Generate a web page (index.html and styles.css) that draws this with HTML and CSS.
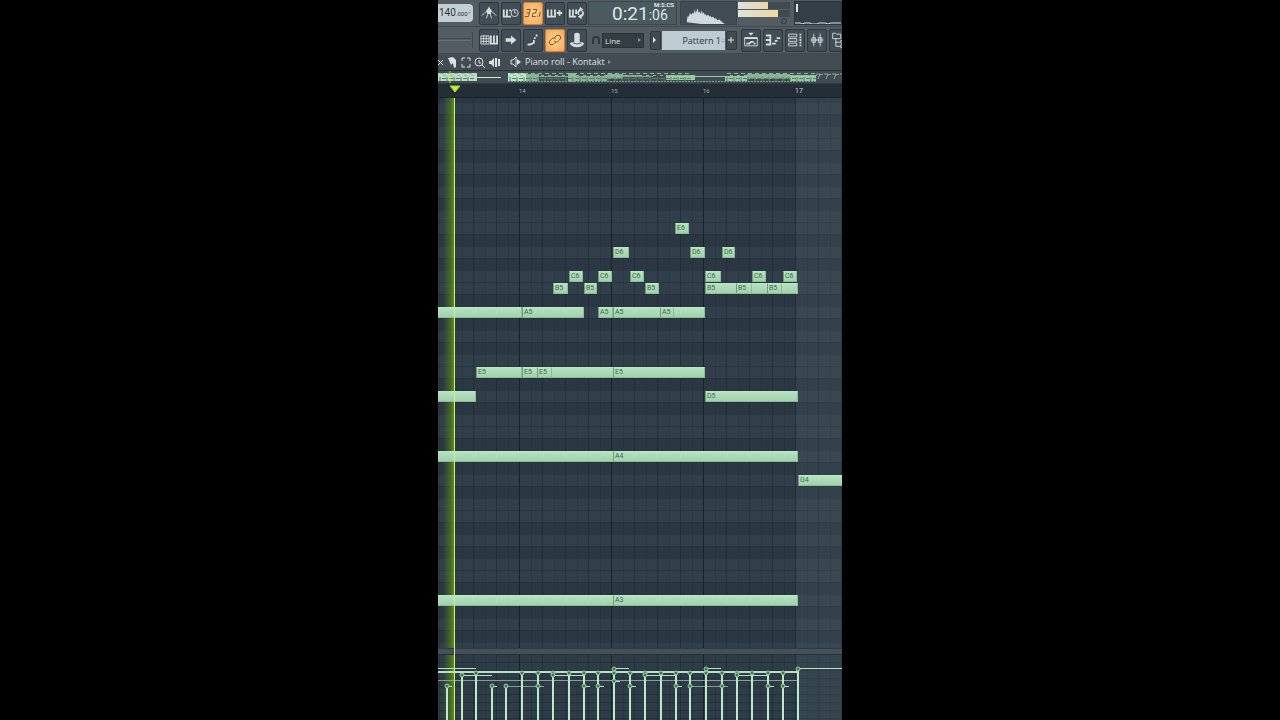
FILE: index.html
```html
<!DOCTYPE html>
<html lang="en">

<head>
  <meta charset="UTF-8" />
  <title>Piano roll - Kontakt</title>
  <link rel="stylesheet" href="styles.css">
</head>

<body>
  <main class="daw">
    <div class="toolbar">
      <button class="tempo">140<small>.000</small><i>÷</i></button>
      <div class="btn-group">
        <button class="tool" aria-label="Metronome"><svg viewBox="0 0 20 20"><path d="M2 13l4-4 4-2 4 2 4 4M10 8l-3 8M10 8l3 8M10 3v3" /><path class="fill" d="M7 7l3-3 3 3-1 4h-4z" /></svg></button>
        <button class="tool" aria-label="Wait for input"><svg viewBox="0 0 20 20"><path class="thick" d="M2 6v8h8M5.500 6v8M9 6v2" /><circle cx="14" cy="10" r="4" /><path d="M14 7v3h2" /></svg></button>
        <button class="tool on" aria-label="Countdown"><svg viewBox="0 0 20 20"><path d="M3 6h4l-1 4H3M6 10l-1 4H1M10 6h4l-1 4h-3l-1 4h4M15 13v1M18 9l-1 5" /></svg></button>
        <button class="tool" aria-label="Overdub"><svg viewBox="0 0 20 20"><path class="thick" d="M2 6v8h8V6M6 6v8M12 10h6M15 7v6" /></svg></button>
        <button class="tool" aria-label="Loop record"><svg viewBox="0 0 20 20"><path class="thick" d="M2 6v8h7M5.500 6v8M9 6v5" /><path class="thick" d="M12 12q-2-4 2-6M16 8q2 4-2 6" /><path class="fill" d="M13 3l4 3-4 3zM15 11l-4 3 4 3z" /></svg></button>
      </div>
      <div class="clock"><span class="clock-main">0:21</span><span class="clock-cs">:06</span><span class="clock-unit">M:S:CS</span></div>
      <svg class="scope" viewBox="0 0 56 24" preserveAspectRatio="none" aria-hidden="true">
        <path d="M6 22V19l1-4 1 1 1-4 2 2 1-3 1 2 1-5 1 4 2-5 1 5 1-2 1 3 1-4 1 4 1-2 1 3 1-1 1 2 2-1 1 2 1-1 1 2 2-1 1 2 2 0 1 2 2-1 2 2 2 2 2 1 4 3v1z" />
      </svg>
      <div class="meters">
        <div class="meter"><span class="meter-left"></span></div>
        <div class="meter"><span class="meter-right"></span></div>
        <i></i>
      </div>
      <div class="master"><svg viewBox="0 0 47 24"><path d="M0 21h5l2 1 3-1h5l2 1h5l2-1h6l3 1 3-1h11" /><path class="thick" d="M2 2v8" /></svg></div>
    </div>

    <div class="toolbar">
      <div class="slot"></div>
      <div class="btn-group">
        <button class="tool" aria-label="Typing keyboard"><svg viewBox="0 0 20 20"><path d="M1 5.500h9v9H1zM1 8.500h9M1 11.500h9M4 5v9M7 5v9" /><path class="thick" d="M12 5v9h7V5M15.500 5v9" /></svg></button>
        <button class="tool" aria-label="Auto scroll"><svg viewBox="0 0 20 20"><path class="fill" d="M4 8h6V5l6 5-6 5v-3H4z" /></svg></button>
        <button class="tool" aria-label="Step edit"><svg viewBox="0 0 20 20"><path class="thick" d="M4 15h3l4-2v-3M12 9V7M14 6V4" /></svg></button>
        <button class="tool on" aria-label="Link notes"><svg viewBox="0 0 20 20"><path d="M9 8l3-3q3-1 4 1 1 2-1 4l-2 2q-2 1-4-1M11 12l-3 3q-3 1-4-1-1-2 1-4l2-2q2-1 4 1" /></svg></button>
        <button class="tool" aria-label="Multilink"><svg viewBox="0 0 20 20"><path class="fill" d="M7 3q3-2 6 0v9q4 0 5 2-2 4-8 4t-8-4q1-2 5-2z" /><path class="cut" d="M5 13q5 3 10 0" /></svg></button>
      </div>
      <svg class="magnet" viewBox="0 0 10 10" aria-hidden="true"><path d="M2 9V5a3 3 0 0 1 6 0v4" /></svg>
      <div class="snap"><select aria-label="Snap"><option>Line</option></select></div>
      <div class="pattern">
        <button class="step" aria-label="Pattern menu"><svg viewBox="0 0 8 8"><path class="fill" d="M2 1l3 3-3 3z" /></svg></button>
        <button class="pattern-name">Pattern 1<i>÷</i></button>
        <button class="step" aria-label="Add pattern"><svg viewBox="0 0 8 8"><path d="M1 4h6M4 1v6" /></svg></button>
      </div>
      <div class="btn-group windows">
        <button class="tool" aria-label="Playlist"><svg viewBox="0 0 20 20"><path d="M3 7.500h14v9H3z" /><path class="thick" d="M3 8h14M5 14h3l2-2h3M13 14h2" /><path class="fill" d="M7 2h6l-3 3z" /></svg></button>
        <button class="tool" aria-label="Piano roll"><svg viewBox="0 0 20 20"><path class="thick" d="M2 5h5v10H2M2 10h5M9 14h4M12 11h3M14 8h4" /></svg></button>
        <button class="tool" aria-label="Channel rack"><svg viewBox="0 0 20 20"><path d="M3 3.500h9v3H3zM3 8.500h9v3H3zM3 13.500h9v3H3z" /><path class="thick dash" d="M16 3v14" /></svg></button>
        <button class="tool" aria-label="Mixer"><svg viewBox="0 0 20 20"><path d="M6.500 3v14M13.500 3v14M3 10h14" /><path d="M4.500 7.500h4v5h-4zM11.500 7.500h4v5h-4z" /></svg></button>
        <button class="tool" aria-label="Browser"><svg viewBox="0 0 20 20"><path d="M3 2.500h3l1 1h5v5H3zM6.500 8v9h5M6 12.500h5M12 10.500h6v3h-6zM12 15.500h6v3h-6z" /></svg></button>
      </div>
    </div>

    <div class="titlebar">
      <svg class="title-tools" viewBox="0 0 64 16" aria-hidden="true">
        <path d="M0 6l5 5M5 6l-5 5" />
        <path class="fill" d="M10 4l5-1 3 3v7l-2 1-1-5-2 2z" />
        <path d="M24 7V4h3M29 4h3v3M32 10v3h-3M27 13h-3v-3" />
        <circle cx="41" cy="8" r="4" /><path d="M44 11l3 3M41 6v3h2" />
        <path class="fill" d="M51 7h2l3-3v9l-3-3h-2z" /><path class="thick" d="M58 4v9M61 5v7" />
      </svg>
      <svg class="speaker" viewBox="0 0 12 12" aria-hidden="true"><path d="M1 4h2l3-3v10L3 8H1z" /><path class="fill" d="M7 3l4 3-4 3z" /></svg>
      <h1>Piano roll - Kontakt</h1>
      <svg class="crumb" viewBox="0 0 4 6" aria-hidden="true"><path class="fill" d="M0 1l3 2-3 2z" /></svg>
    </div>

    <svg class="overview" id="overview" viewBox="0 0 404 14" preserveAspectRatio="none" aria-hidden="true"></svg>

    <div class="ruler">
      <svg class="marker" viewBox="0 0 12 8" aria-hidden="true"><path d="M1 1h10L6 7z" /></svg>
      <span class="bar-no">14</span><span class="bar-no">15</span><span class="bar-no">16</span><span class="bar-no strong">17</span>
    </div>

    <div class="roll" id="roll"></div>
    <div class="splitter"></div>
    <div class="velocity"><svg id="velocity" width="404" height="65" aria-hidden="true"></svg></div>
    <div class="playhead-glow"></div>
    <div class="playhead"></div>
  </main>

  <script src="script.js"></script>
</body>

</html>
```

FILE: styles.css
```css
:root {
  --panel: #535c62;
  --icon: #d5dddf;
  --grid-dark: rgba(16, 26, 34, 0.6);
}

* {
  margin: 0;
  padding: 0;
  box-sizing: border-box;
}

body {
  background: #000;
  font-family: "Open Sans", "Noto Sans", sans-serif;
  color: #dce3e6;
  overflow: hidden;
}

button,
select {
  font: inherit;
  color: inherit;
  border: none;
}

.daw {
  position: relative;
  display: flex;
  flex-direction: column;
  width: 100%;
  max-width: 404px;
  height: 100vh;
  margin: 0 auto;
  overflow: hidden;
  background: var(--panel);
}

/* Toolbars */
.toolbar {
  display: flex;
  flex: none;
  align-items: center;
  height: 27px;
  background: var(--panel);
  border-bottom: 1px solid #414a50;
}

.tempo {
  display: flex;
  flex: none;
  width: 35px;
  height: 18px;
  margin-right: 6px;
  padding-left: 1px;
  border-radius: 0 4px 4px 0;
  background: #c4cfd4;
  color: #2c363c;
  font-family: Roboto, sans-serif;
  font-size: 10px;
  line-height: 18px;
  white-space: nowrap;
}

.tempo small {
  font-size: 6px;
  line-height: 20px;
}

.tempo i,
.pattern-name i {
  color: #7f8b92;
  font-size: 7px;
  font-style: normal;
}

.btn-group {
  display: flex;
  flex: none;
  gap: 2px;
}

.tool {
  flex: none;
  width: 20px;
  height: 23px;
  border: 1px solid #2d363d;
  border-radius: 2px;
  background: #434d55;
  color: var(--icon);
}

.tool svg {
  display: block;
  width: 18px;
  height: 18px;
}

svg {
  fill: none;
  stroke: currentColor;
}

svg .fill {
  fill: currentColor;
  stroke: none;
}

svg .thick {
  stroke-width: 2;
}

svg .dash {
  stroke-dasharray: 2 1;
}

svg .cut {
  stroke: #434d55;
}

.tool.on {
  background: radial-gradient(#ffd899, #f9a550);
  border-color: #c9803c;
  color: #69421f;
}

.clock {
  position: relative;
  display: flex;
  flex: none;
  align-items: baseline;
  width: 89px;
  height: 24px;
  margin-left: 1px;
  padding-left: 23px;
  border: 1px solid #3c484c;
  background: #4a5b5f;
  color: #dce8e6;
  font-family: Roboto, "Open Sans", sans-serif;
  line-height: 24px;
}

.clock-main {
  font-size: 19px;
}

.clock-cs {
  font-size: 14px;
}

.clock-unit {
  position: absolute;
  top: 0;
  right: 2px;
  font-size: 6px;
  font-weight: bold;
  line-height: 6px;
}

.scope {
  flex: none;
  width: 57px;
  height: 24px;
  margin-left: 3px;
  border: 1px solid #38434b;
  background: #414c55;
}

.scope path {
  fill: #d0d9df;
  stroke: none;
}

.meters {
  display: flex;
  flex: none;
  flex-direction: column;
  gap: 1px;
  width: 52px;
  height: 23px;
  margin-left: 1px;
}

.meter {
  height: 7px;
  background: #414a51;
}

.meter span {
  display: block;
  height: 100%;
  background: linear-gradient(90deg, #dfe0dc, #ead8a4);
}

.meter-left {
  width: 57%;
}

.meter-right {
  width: 76%;
}

.meters i {
  align-self: flex-end;
  width: 6px;
  height: 6px;
  margin-right: 3px;
  border: 1px solid #2f383e;
  border-radius: 50%;
}

.master {
  flex: 1;
  height: 24px;
  margin-left: 4px;
  overflow: hidden;
  border: 1px solid #29343b;
  background: #333e46;
}

.master svg {
  display: block;
  width: 47px;
  height: 24px;
}

.slot {
  flex: none;
  width: 35px;
  height: 16px;
  margin-right: 6px;
  border-right: 1px solid #3f484e;
  background: linear-gradient(#3f484e, #3f484e) 0 6px / 33px 1px no-repeat, linear-gradient(#677178, #677178) 0 8px / 33px 1px no-repeat;
}

.magnet {
  flex: none;
  width: 10px;
  height: 10px;
  margin-left: 4px;
  color: #30393f;
  stroke-width: 2;
}

.snap {
  position: relative;
  flex: none;
  width: 42px;
  margin-left: 1px;
}

.snap select {
  display: block;
  width: 100%;
  height: 15px;
  padding-left: 2px;
  appearance: none;
  background: #343d44;
  border: 1px solid #2b3339;
  font-size: 8px;
}

.snap::after {
  content: "";
  position: absolute;
  top: 5px;
  right: 1px;
  border: 2px solid transparent;
  border-left: 3px solid #899398;
}

.pattern {
  display: flex;
  flex: none;
  gap: 1px;
  margin-left: 6px;
}

.step {
  width: 11px;
  height: 19px;
  border: 1px solid #2e373d;
  border-radius: 2px;
  background: #414a51;
}

.step svg {
  display: block;
  width: 8px;
  height: 8px;
}

.pattern-name {
  width: 63px;
  height: 19px;
  background: #bdcbd2;
  color: #29343b;
  font-family: "Open Sans", sans-serif;
  font-size: 9px;
  line-height: 19px;
  text-align: right;
  white-space: nowrap;
}

.windows {
  margin-left: 4px;
}

/* Window title */
.titlebar {
  display: flex;
  flex: none;
  align-items: center;
  height: 16px;
  background: #434c53;
}

.title-tools {
  width: 64px;
  height: 16px;
}

.speaker {
  width: 12px;
  height: 12px;
  margin-left: 8px;
}

.titlebar h1 {
  margin-left: 3px;
  font-size: 9px;
  font-weight: normal;
  line-height: 14px;
  white-space: nowrap;
}

.crumb {
  width: 4px;
  height: 6px;
  margin-left: 3px;
  color: #89939a;
}

.overview {
  display: block;
  flex: none;
  width: 100%;
  height: 14px;
  background: #414b52;
}

/* Ruler */
.ruler {
  position: relative;
  display: flex;
  flex: none;
  height: 14px;
  padding-left: 81px;
  background: #232e36;
  border-bottom: 1px solid #18232b;
}

.bar-no {
  flex: none;
  width: 92px;
  color: #a2acb1;
  font-family: Roboto, sans-serif;
  font-size: 6px;
  line-height: 14px;
}

.bar-no.strong {
  width: auto;
  color: #d0d7da;
  font-size: 7px;
}

.marker {
  position: absolute;
  left: 11px;
  top: 1px;
  width: 12px;
  height: 8px;
  fill: #c3ef3c;
  stroke: #a9cf38;
}

/* Note grid: one octave is twelve 12px rows */
.roll {
  position: relative;
  flex: 1;
  overflow: hidden;
  background:
    linear-gradient(90deg, transparent 357px, rgba(120, 145, 150, 0.1) 357px),
    linear-gradient(90deg, var(--grid-dark) 1px, transparent 1px) 81px 0 / 92px 100%,
    linear-gradient(90deg, rgba(16, 26, 34, 0.35) 1px, transparent 1px 12px, rgba(16, 26, 34, 0.15) 12px 13px, transparent 13px) 12px 0 / 23px 100%,
    linear-gradient(rgba(16, 26, 34, 0.2) 1px, transparent 1px) 0 4px / 100% 12px,
    linear-gradient(#313f4b 12px, #2b3844 12px 24px, #313f4b 24px 36px, #2b3844 36px 48px, #313f4b 48px 60px, #2b3844 60px 72px, #313f4b 72px 96px, #2b3844 96px 108px, #313f4b 108px 120px, #2b3844 120px 132px, #313f4b 132px) 0 40px / 100% 144px;
}

.note {
  position: absolute;
  z-index: 1;
  height: 11px;
  padding-left: 1px;
  border: 1px solid #8fbb9b;
  border-top-color: #bce5c4;
  border-left-color: #6f9a7d;
  border-radius: 1px;
  background: linear-gradient(#b5e2bf, #a1d1ad);
  color: #3d6849;
  font-family: Roboto, sans-serif;
  font-size: 7px;
  line-height: 9px;
}

.splitter {
  flex: none;
  height: 7px;
  background: #465057;
  border-top: 1px solid #303a41;
  border-bottom: 1px solid #26313a;
}

/* Velocity lane */
.velocity {
  position: relative;
  z-index: 1;
  flex: none;
  height: 65px;
  overflow: hidden;
  background:
    linear-gradient(90deg, transparent 5px, rgba(86, 130, 24, 0.6) 12px, #5e9a16 17px, transparent 17px),
    linear-gradient(90deg, transparent 357px, rgba(120, 145, 150, 0.1) 357px),
    linear-gradient(90deg, var(--grid-dark) 1px, transparent 1px) 81px 0 / 92px 100%,
    linear-gradient(90deg, rgba(16, 26, 34, 0.35) 1px, transparent 1px 12px, rgba(16, 26, 34, 0.15) 12px 13px, transparent 13px) 12px 0 / 23px 100%,
    linear-gradient(rgba(16, 26, 34, 0.25) 1px, transparent 1px) 0 7px / 100% 8px,
    #2e3c47;
}

.velocity svg {
  display: block;
}

.velocity line {
  stroke: #b9dfc5;
}

.velocity .stem {
  stroke: #bfe8c9;
  stroke-width: 2;
}

.velocity .main {
  stroke-width: 2;
}

.velocity .dim {
  stroke: #839e96;
}

.velocity circle {
  fill: #447453;
  stroke: #9bd0a8;
}

.playhead-glow,
.playhead {
  position: absolute;
  top: 98px;
  bottom: 0;
}

.playhead-glow {
  left: 5px;
  width: 12px;
  bottom: 72px;
  background: linear-gradient(90deg, transparent, rgba(86, 130, 24, 0.6) 60%, #5e9a16);
}

.playhead {
  z-index: 2;
  left: 16px;
  width: 1px;
  background: #d0f27a;
}
```

FILE: script.js
```js
// [pitch, start, end] with time in px from the left edge of the grid
const notes = [
  ['E6', 237, 251],
  ['D6', 175, 191], ['D6', 252, 267], ['D6', 284, 297],
  ['C6', 131, 145], ['C6', 160, 174], ['C6', 192, 206], ['C6', 267, 283], ['C6', 314, 328], ['C6', 345, 359],
  ['B5', 115, 130], ['B5', 146, 159], ['B5', 207, 221], ['B5', 267, 360], ['B5', 298, 314], ['B5', 329, 344],
  ['A5', -20, 84], ['A5', 84, 146], ['A5', 160, 175], ['A5', 175, 267], ['A5', 222, 236],
  ['E5', 38, 84], ['E5', 84, 176], ['E5', 99, 114], ['E5', 175, 267],
  ['D5', -20, 38], ['D5', 267, 360],
  ['A4', -20, 176], ['A4', 175, 360],
  ['G4', 360, 412],
  ['A3', -20, 176], ['A3', 175, 360]
];
const rowTop = { E6: 125, D6: 149, C6: 173, B5: 185, A5: 209, E5: 269, D5: 293, A4: 353, G4: 377, A3: 497 };

const roll = document.getElementById('roll');
notes.forEach(([pitch, start, end]) => {
  const el = document.createElement('div');
  el.className = 'note';
  // notes that began before the visible range have no label
  if (start >= 0) el.textContent = pitch;
  el.style.left = start + 'px';
  el.style.top = rowTop[pitch] + 'px';
  el.style.width = (end - start) + 'px';
  roll.appendChild(el);
});

// Velocity: [x, handle heights...]
const stems = [
  [9, 31], [24, 20], [38, 18], [54, 31], [68, 31], [84, 18], [100, 18, 31], [115, 18, 20],
  [131, 18], [146, 18, 31], [160, 18, 31], [176, 14, 18, 26], [192, 18, 31], [207, 18, 20],
  [223, 18], [238, 18, 31], [252, 18, 31], [268, 14, 18], [284, 18, 31], [299, 18, 20],
  [314, 18], [330, 18, 31], [345, 18, 31], [360, 14]
];
// [x1, x2, y, class]
const tails = [
  [0, 38, 13], [176, 191, 13], [268, 283, 13], [360, 404, 13],
  [0, 360, 17, 'main'], [0, 360, 25, 'dim'],
  [24, 54, 20], [115, 146, 20], [207, 238, 20], [299, 330, 20],
  [9, 14, 31], [54, 59, 31], [68, 106, 31, 'dim'], [146, 152, 31], [160, 166, 31], [192, 198, 31],
  [238, 244, 31], [252, 290, 31, 'dim'], [330, 336, 31], [345, 351, 31], [176, 182, 26]
];
let out = '';
tails.forEach(([x1, x2, y, cls]) => {
  const mid = cls === 'main' ? y : y + 0.5;
  out += `<line x1="${x1}" x2="${x2}" y1="${mid}" y2="${mid}" class="${cls || ''}"/>`;
});
stems.forEach(([x, ...ys]) => {
  out += `<line class="stem" x1="${x}" x2="${x}" y1="${ys[0]}" y2="65"/>`;
  ys.forEach(y => { out += `<circle cx="${x}" cy="${y}" r="2"/>`; });
});
document.getElementById('velocity').innerHTML = out;

// Overview strip: [x, y, w, h, colour]
const blocks = [
  [0, 3, 39, 8, '#b9dcc2'], [39, 7, 24, 1, '#c8eed0'],
  [70, 3, 18, 8, '#b9e8c4'], [88, 4, 13, 7, '#83b592'],
  [101, 6, 30, 1, '#83a990'], [130, 3, 8, 9, '#88bd98'], [138, 6, 31, 5, '#83b592'],
  [169, 4, 16, 5, '#83b592'], [185, 5, 18, 2, '#83a990'], [203, 6, 12, 1, '#83a990'],
  [228, 5, 29, 5, '#94cda3'], [257, 6, 30, 1, '#94cda3'], [287, 6, 22, 5, '#94cda3'],
  [309, 4, 43, 5, '#83b592'], [352, 5, 26, 6, '#94cda3']
];
let strip = '<rect x="0" y="0" width="404" height="1" fill="#26313a" stroke="none"/>';
blocks.forEach(([x, y, w, h, c]) => {
  strip += `<rect x="${x}" y="${y}" width="${w}" height="${h}" fill="${c}" stroke="none"/>`;
});
for (let x = 2; x < 376; x += 7) {
  const gap = (x > 33 && x < 70) || (x > 252 && x < 286);
  if (gap) continue;
  strip += `<path d="M${x} 3.5h4M${x + 3} 5.500h3" stroke="#8fb59b"/>`;
  strip += `<path d="M${x} 7v4M${x + 2} 8.500h4" stroke="#5d7a6b"/>`;
}
for (let x = 378; x < 404; x += 8) {
  strip += `<path d="M${x} 4h4l-2 5M${x + 4} 5l3-1" stroke="#93ab9b"/>`;
}
strip += '<path d="M70 11.5h186M256 11.5h122" stroke="#7a9a86" stroke-dasharray="2 1"/>';
strip += '<path d="M12 1v12" stroke="#d6df55"/><path d="M0 13.5h404" stroke="#303b43"/>';
document.getElementById('overview').innerHTML = strip;
```
